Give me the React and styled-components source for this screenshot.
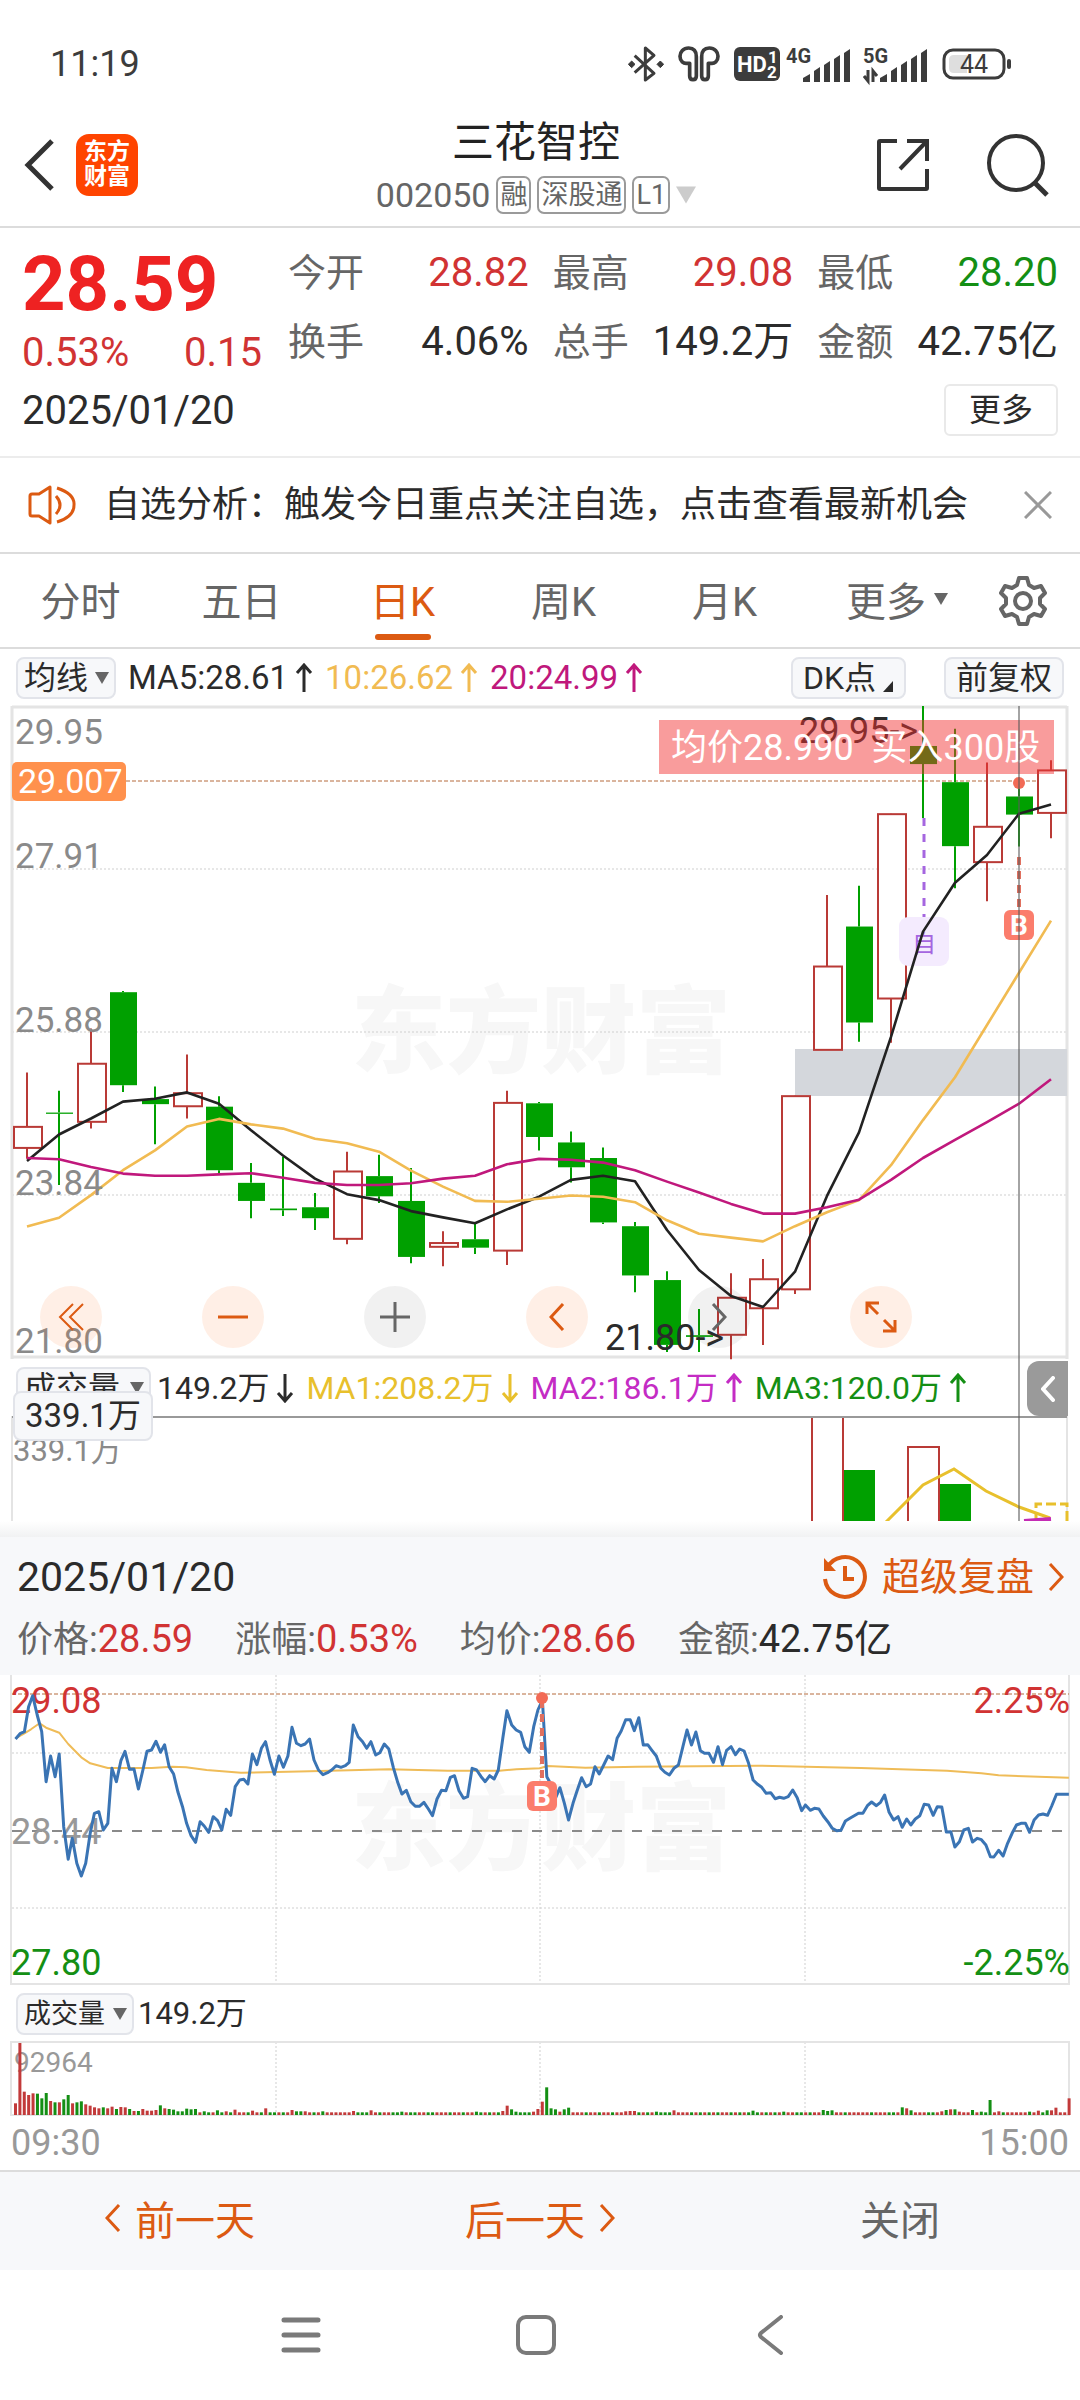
import React from "react";
import styled, { createGlobalStyle } from "styled-components";

const C = {
  ink: "#2b2b2b",
  mute: "#666666",
  axis: "#8a8a8a",
  line: "#dcdcdc",
  frame: "#e4e4e4",
  panel: "#f7f8fa",
  accent: "#dc5a12",
  red: "#d13333",
  green: "#148f14",
  fill: "#00a000",
  hollow: "#b93a36",
  ma5: "#222222",
  ma10: "#f1bb52",
  ma20: "#c0187c",
};

const Global = createGlobalStyle`
  *, *::before, *::after { box-sizing: border-box; }
  body {
    margin: 0;
    background: #ffffff;
    color: ${C.ink};
    font-family: Roboto, "Noto Sans CJK SC", sans-serif;
  }
  button, select { font: inherit; color: inherit; }
  svg { display: block; flex: none; }
  svg text { font-family: Roboto, "Noto Sans CJK SC", sans-serif; }
`;

/* ---------- status bar ---------- */

const StatusBar = styled.div`
  display: flex;
  align-items: center;
  justify-content: space-between;
  height: 120px;
  padding: 8px 68px 0 50px;
`;
const Clock = styled.time`
  font-size: 36px;
  line-height: 40px;
  color: #3c3c3c;
`;
const StatusIcons = styled.div`
  display: flex;
  align-items: center;
  gap: 14px;
  color: #3c3c3c;
`;
const SignalGroup = styled.div`
  display: flex;
  gap: 12px;
`;
const HdGroup = styled.div`
  display: flex;
  align-items: center;
  gap: 6px;
`;

function Bluetooth() {
  return (
    <svg width="36" height="40" viewBox="0 0 108 120">
      <path d="M20 35 78 88 52 108V12L78 34 20 86" fill="none" stroke="currentColor" strokeWidth="9" strokeLinejoin="round" />
      <path d="M11 51 21 61 11 71 1 61zM97 51l10 10-10 10-10-10z" fill="currentColor" stroke="currentColor" strokeWidth="3" strokeLinejoin="round" />
    </svg>
  );
}
function Earbuds() {
  return (
    <svg width="42" height="36" viewBox="0 0 126 108">
      <g fill="none" stroke="currentColor" strokeWidth="11" strokeLinejoin="round">
        <path d="M35 52V90q0 11 10 11t10-11V32C55 12 44 6 32 6 16 6 6 18 6 31 6 46 17 53 26 52z" />
        <path d="M91 52V90q0 11-10 11T71 90V32C71 12 82 6 94 6c16 0 26 12 26 25 0 15-11 22-20 21z" />
      </g>
    </svg>
  );
}
function HdBadge() {
  return (
    <svg width="46" height="36" viewBox="0 0 46 36">
      <rect y="1" width="46" height="34" rx="6" fill="currentColor" />
      <g fill="#fff" fontWeight="700">
        <text x="3" y="26" fontSize="22">HD</text>
        <text x="34" y="17" fontSize="17">1</text>
        <text x="33" y="32" fontSize="17">2</text>
      </g>
    </svg>
  );
}
function Signal({ label, arrows }) {
  return (
    <svg width="65" height="44" viewBox="0 -6 65 44">
      <text x="0" y="15" fontSize="20" fontWeight="700" fill="currentColor">{label}</text>
      <path d="M17 34v-4l7-4v8zM28 34V23l6-4v15zM38 34V17l6-4v21zM48 34V11l6-4v27zM58 34V5l6-4v33z" fill="currentColor" />
      {arrows && <path d="M5 22v11l-4-5M10 34V23l4 5" fill="none" stroke="currentColor" strokeWidth="3" />}
    </svg>
  );
}
function Battery() {
  return (
    <svg width="70" height="32" viewBox="0 0 70 32">
      <rect x="2" y="2" width="60" height="28" rx="9" fill="none" stroke="currentColor" strokeWidth="3" />
      <path d="M12 7h13v18H12q-5 0-5-5v-8q0-5 5-5z" fill="#dedede" />
      <rect x="65" y="11" width="4" height="10" rx="2" fill="currentColor" />
      <text x="32" y="25" fontSize="25" textAnchor="middle" fill="currentColor">44</text>
    </svg>
  );
}

/* ---------- header ---------- */

const Header = styled.header`
  display: grid;
  grid-template-columns: 1fr auto 1fr;
  align-items: start;
  height: 108px;
  padding: 0 30px 0 22px;
  border-bottom: 2px solid ${C.line};
`;
const HeaderSide = styled.div`
  display: flex;
  align-items: center;
  height: 90px;
  gap: ${(p) => p.$gap}px;
  justify-content: ${(p) => (p.$end ? "flex-end" : "flex-start")};
`;
const IconButton = styled.button`
  display: flex;
  align-items: center;
  justify-content: center;
  padding: 0;
  border: 0;
  background: none;
  color: ${(p) => p.$color || "#333333"};
`;
const Logo = styled.div`
  width: 62px;
  height: 62px;
  padding: 5px 0;
  border-radius: 13px;
  background: #ff4400;
  color: #ffffff;
  font-size: 23px;
  font-weight: 700;
  line-height: 25px;
  text-align: center;
`;
const TitleBlock = styled.div`
  display: flex;
  flex-direction: column;
  align-items: center;
  gap: 8px;
`;
const StockName = styled.h1`
  margin: 0;
  font-size: 42px;
  font-weight: 400;
  line-height: 46px;
  color: #222222;
`;
const StockMeta = styled.div`
  display: flex;
  align-items: center;
  gap: 6px;
  font-size: 34px;
  line-height: 42px;
  color: ${C.mute};
`;
const Tag = styled.span`
  padding: 0 2px;
  border: 2px solid #9a9a9a;
  border-radius: 7px;
  font-size: 27px;
  line-height: 34px;
`;

const Caret = ({ size = 14, color = "#666666" }) => (
  <svg width={size} height={size} viewBox="0 0 14 14">
    <path d="M0 1h14L7 13z" fill={color} />
  </svg>
);
const Chevron = ({ dir, w = 16, h = 28, stroke = 3 }) => (
  <svg width={w} height={h} viewBox="0 0 16 28" fill="none" stroke="currentColor" strokeWidth={stroke}>
    <path d={dir === "left" ? "M14 1 2 14 14 27" : "M2 1 14 14 2 27"} />
  </svg>
);

/* ---------- quote ---------- */

const Quote = styled.section`
  display: grid;
  grid-template-columns: 240px 1fr;
  column-gap: 26px;
  row-gap: 8px;
  align-content: start;
  height: 230px;
  padding: 10px 22px 0 22px;
  border-bottom: 2px solid #ececec;
`;
const Price = styled.div`
  font-size: 76px;
  font-weight: 700;
  line-height: 92px;
  color: #ee2222;
`;
const Change = styled.div`
  display: flex;
  justify-content: space-between;
  font-size: 40px;
  line-height: 46px;
  color: ${C.red};
`;
const Stats = styled.dl`
  display: grid;
  grid-template-columns: repeat(3, 1fr);
  grid-template-rows: 69px 69px;
  column-gap: 24px;
  margin: 0;
`;
const Stat = styled.div`
  display: flex;
  justify-content: space-between;
  align-items: center;
  font-size: 38px;
  line-height: 44px;
`;
const StatLabel = styled.dt`
  color: ${C.mute};
`;
const StatValue = styled.dd`
  margin: 0;
  font-size: 40px;
  color: ${(p) => p.$color || C.ink};
`;
const DateRow = styled.div`
  grid-column: 1 / -1;
  display: flex;
  justify-content: space-between;
  align-items: center;
  height: 52px;
  font-size: 40px;
`;
const MoreButton = styled.button`
  height: 52px;
  padding: 0 23px;
  border: 2px solid #e9e9e9;
  border-radius: 6px;
  background: #ffffff;
  font-size: 32px;
  line-height: 44px;
`;

/* ---------- notice ---------- */

const Notice = styled.section`
  display: flex;
  align-items: center;
  height: 96px;
  padding: 0 28px;
  border-bottom: 2px solid ${C.line};
`;
const NoticeText = styled.p`
  flex: 1;
  margin: 0 0 0 28px;
  font-size: 36px;
  line-height: 44px;
`;

/* ---------- tabs ---------- */

const Tabs = styled.nav`
  display: grid;
  grid-template-columns: repeat(5, 161fr) 184fr 68fr;
  height: 95px;
  padding-right: 23px;
  border-bottom: 2px solid ${C.line};
`;
const Tab = styled.button`
  display: flex;
  align-items: center;
  justify-content: center;
  gap: 8px;
  position: relative;
  padding: 0 0 4px;
  border: 0;
  background: none;
  font-size: 40px;
  color: ${(p) => (p.$active ? C.accent : C.mute)};
  &::after {
    content: "";
    display: ${(p) => (p.$active ? "block" : "none")};
    position: absolute;
    bottom: 7px;
    width: 56px;
    height: 6px;
    border-radius: 3px;
    background: ${C.accent};
  }
`;

/* ---------- indicator rows ---------- */

const IndicatorRow = styled.div`
  display: flex;
  align-items: center;
  gap: ${(p) => p.$gap || 12}px;
  height: ${(p) => p.$height}px;
  padding: 0 16px;
`;
const Readings = styled.div`
  display: flex;
  align-items: center;
  gap: 12px;
`;
const ChipGroup = styled.div`
  display: flex;
  gap: 38px;
  margin-left: auto;
`;
const Chip = styled.button`
  display: flex;
  align-items: flex-end;
  gap: 6px;
  height: 42px;
  padding: 0 10px;
  border: 2px solid #e2e4ea;
  border-radius: 8px;
  background: ${C.panel};
  font-size: 32px;
  line-height: 38px;
`;
const SelectBox = styled.label`
  display: inline-flex;
  align-items: center;
  position: relative;
  svg {
    position: absolute;
    right: 7px;
    pointer-events: none;
  }
`;
const ChipSelect = styled.select`
  appearance: none;
  height: 42px;
  padding: 0 ${(p) => p.$room}px 0 6px;
  border: 2px solid #e2e4ea;
  border-radius: 8px;
  background: ${C.panel};
  font-size: ${(p) => p.$size}px;
  line-height: 38px;
`;
const Reading = styled.span`
  display: flex;
  align-items: center;
  gap: 7px;
  font-size: ${(p) => p.$size || 33}px;
  line-height: 40px;
  white-space: nowrap;
  color: ${(p) => p.$color};
`;
const Arrow = ({ down }) => (
  <svg width="18" height="30" viewBox="0 0 18 30" fill="none" stroke="currentColor" strokeWidth="3">
    <path d={down ? "M9 1v27M2 20l7 8 7-8" : "M9 29V2M2 10l7-8 7 8"} />
  </svg>
);
function Dropdown({ label, value, size = 32, room = 27 }) {
  return (
    <SelectBox>
      <ChipSelect aria-label={label} defaultValue={value} $size={size} $room={room}>
        <option>{value}</option>
      </ChipSelect>
      <Caret size={14} />
    </SelectBox>
  );
}

/* ---------- daily candle chart ---------- */

const ChartArea = styled.section`
  position: relative;
`;
const Plot = styled.svg`
  width: 100%;
  height: auto;
  overflow: ${(p) => (p.$spill ? "visible" : "hidden")};
`;
const Crosshair = styled.div`
  position: absolute;
  top: 0;
  bottom: 0;
  left: 94.3%;
  width: 2px;
  background: rgba(90, 90, 90, 0.55);
`;
const CandleBox = styled.div`
  position: relative;
`;
const Controls = styled.div`
  position: absolute;
  left: 40px;
  bottom: 11px;
  display: flex;
  gap: 100px;
`;
const RoundButton = styled(IconButton)`
  width: 62px;
  height: 62px;
  border-radius: 50%;
  background: ${(p) => (p.$off ? "rgba(60, 60, 60, 0.07)" : "rgba(255, 110, 30, 0.11)")};
  color: ${(p) => (p.$off ? C.mute : C.accent)};
`;

// [high, body top, body bottom, low, rising]
const CANDLES = [
  [885, 1014, 1064, 1090, 1], [928, 980, 983, 1152, 0], [780, 864, 1002, 1018, 1],
  [691, 694, 915, 931, 0], [918, 948, 960, 1055, 0], [842, 934, 965, 994, 1],
  [941, 966, 1117, 1125, 0], [1100, 1147, 1190, 1231, 0], [1085, 1208, 1212, 1226, 0],
  [1171, 1205, 1231, 1259, 0], [1073, 1120, 1280, 1293, 1], [1080, 1131, 1179, 1195, 0],
  [1112, 1190, 1323, 1338, 0], [1262, 1290, 1299, 1345, 1], [1243, 1281, 1301, 1316, 0],
  [928, 957, 1308, 1342, 1], [955, 958, 1038, 1070, 0], [1025, 1051, 1110, 1146, 0],
  [1063, 1088, 1241, 1245, 0], [1240, 1250, 1367, 1407, 0], [1357, 1378, 1532, 1549, 0],
  [1447, 1509, 1513, 1549, 0], [1362, 1420, 1508, 1566, 1], [1328, 1376, 1445, 1532, 1],
  [940, 941, 1400, 1411, 1], [463, 633, 831, 831, 1], [441, 538, 766, 812, 0],
  [270, 271, 709, 814, 1], [14, 109, 152, 280, 0], [68, 195, 347, 447, 0],
  [148, 301, 385, 478, 1], [185, 229, 272, 348, 0], [143, 167, 268, 328, 1],
];
const MA5 = [1095, 1032, 994, 954, 947, 932, 959, 1022, 1082, 1137, 1174, 1188, 1214, 1229, 1243, 1210, 1180, 1140, 1130, 1143, 1259, 1354, 1416, 1442, 1358, 1178, 1027, 800, 550, 434, 368, 270, 248];
const MA10 = [1251, 1230, 1176, 1117, 1070, 1013, 995, 1008, 1018, 1042, 1053, 1073, 1118, 1156, 1190, 1192, 1185, 1177, 1180, 1193, 1236, 1268, 1277, 1286, 1250, 1217, 1188, 1105, 998, 896, 772, 648, 524];
const MA20 = [1088, 1091, 1109, 1125, 1130, 1130, 1127, 1124, 1135, 1147, 1152, 1152, 1148, 1137, 1130, 1103, 1090, 1092, 1099, 1117, 1144, 1170, 1197, 1220, 1220, 1205, 1187, 1140, 1088, 1045, 1003, 959, 901];

const cx = (i) => 27 + 32 * i;
const cy = (v) => 706 + (v - 14) / 2.376;
const maPath = (list) => list.map((v, i) => `${cx(i)},${cy(v).toFixed(1)}`).join(" ");

function Watermark({ y }) {
  return (
    <text x="541" y={y} fontSize="95" fontWeight="900" textAnchor="middle" fill="#f7f7f7">东方财富</text>
  );
}

function BuyMark({ x, y, dotY, lineTop }) {
  return (
    <g>
      <path d={`M${x} ${lineTop}V${y - 15}`} stroke="#e0705f" strokeWidth="4" strokeDasharray="8 6" />
      <circle cx={x} cy={dotY} r="6" fill="#f26a55" />
      <rect x={x - 15} y={y - 15} width="30" height="30" rx="6" fill="#fb7d6c" />
      <text x={x} y={y + 10} fontSize="28" fontWeight="700" textAnchor="middle" fill="#fff">B</text>
    </g>
  );
}

function CandleChart() {
  return (
    <Plot $spill viewBox="0 706 1080 653" role="img" aria-label="日K">
      <Watermark y="1066" />
      <g stroke="#cfcfcf" strokeWidth="1" strokeDasharray="2 2">
        <path d="M12 869H1067M12 1032H1067M12 1195H1067" />
      </g>
      <path d="M12 707H1067M12 1357H1067" stroke={C.frame} strokeWidth="3" />
      <path d="M12 706V1359M1067 706V1359" stroke={C.frame} strokeWidth="3" />
      <rect x="795" y="1049" width="272" height="47" fill="#d4d7dc" />
      <path d="M12 781H1067" stroke="#b56a3c" strokeWidth="1" strokeDasharray="4 2" />
      {CANDLES.map(([hi, top, bot, lo, up], i) => (
        <g key={i}>
          <path
            d={`M${cx(i)} ${cy(hi)}V${cy(top)}M${cx(i)} ${cy(bot)}V${cy(lo)}`}
            stroke={up ? C.hollow : C.fill}
            strokeWidth="2"
          />
          <rect
            x={cx(i) - 13}
            y={cy(top)}
            width={up ? 28 : 27}
            height={cy(bot) - cy(top)}
            fill={up ? "#ffffff" : C.fill}
            stroke={up ? C.hollow : "none"}
            strokeWidth="2"
          />
        </g>
      ))}
      <path d="M924 818V918" stroke="#a566e0" strokeWidth="3" strokeDasharray="8 8" />
      <rect x="899" y="917" width="50" height="49" rx="9" fill="#f4ebfe" />
      <text x="924" y="952" fontSize="24" textAnchor="middle" fill="#a566e0">自</text>
      <g fill="none" strokeWidth="2.6" strokeLinejoin="round">
        <polyline points={maPath(MA5)} stroke={C.ma5} />
        <polyline points={maPath(MA10)} stroke={C.ma10} />
        <polyline points={maPath(MA20)} stroke={C.ma20} />
      </g>
      <g fontSize="36" fill={C.ink}>
        <text x="799" y="743">29.95-&gt;</text>
        <text x="605" y="1350">21.80-&gt;</text>
      </g>
      <g fontSize="35" fill={C.axis}>
        <text x="15" y="744">29.95</text>
        <text x="15" y="868">27.91</text>
        <text x="15" y="1032">25.88</text>
        <text x="15" y="1195">23.84</text>
        <text x="15" y="1353">21.80</text>
      </g>
      <rect x="12" y="762" width="114" height="39" rx="5" fill="#ff914d" />
      <text x="18" y="793" fontSize="34" fill="#fff">29.007</text>
      <BuyMark x={1019} y={925} dotY={783} lineTop={857} />
      <rect x="659" y="720" width="395" height="54" fill="rgba(243, 48, 48, 0.48)" />
      <text x="671" y="760" fontSize="36" fill="#fff">均价28.990&#160;&#160;买入300股</text>
    </Plot>
  );
}

/* ---------- daily volume ---------- */

const ExpandTab = styled(IconButton)`
  position: absolute;
  right: 12px;
  top: 2px;
  width: 41px;
  height: 55px;
  border-radius: 12px 0 0 12px;
  background: #9a9a9a;
  color: #ffffff;
`;
const VolumeHead = styled.div`
  position: relative;
`;
const VolumeBox = styled.div`
  position: relative;
`;
const CursorValue = styled.output`
  position: absolute;
  left: 13px;
  top: -25px;
  padding: 0 10px;
  border: 2px solid #e2e4ea;
  border-radius: 8px;
  background: ${C.panel};
  font-size: 33px;
  line-height: 46px;
`;

function DailyVolume() {
  return (
    <Plot viewBox="0 1416 1080 105" role="img" aria-label="成交量">
      <text x="13" y="1461" fontSize="31" fill={C.axis}>339.1万</text>
      <path d="M12 1416V1521M1067 1416V1521" stroke={C.frame} strokeWidth="2" />
      <g fill="#fff" stroke={C.hollow} strokeWidth="2">
        <rect x="812" y="1417" width="31" height="120" />
        <rect x="908" y="1447" width="31" height="90" />
      </g>
      <g fill={C.fill}>
        <rect x="844" y="1470" width="31" height="60" />
        <rect x="940" y="1484" width="31" height="60" />
      </g>
      <path d="M886 1522 923 1485 954 1469 986 1491 1019 1507 1050 1518" fill="none" stroke="#e8c02c" strokeWidth="3" />
      <path d="M1036 1522V1504H1067V1522" fill="none" stroke="#e8c02c" strokeWidth="3" strokeDasharray="10 4" />
      <path d="M1024 1521 1051 1519" stroke="#c42cb4" strokeWidth="4" />
      <path d="M12 1417H1067" stroke="#999999" strokeWidth="2" />
    </Plot>
  );
}

/* ---------- review panel ---------- */

const PanelShadow = styled.div`
  height: 16px;
  background: linear-gradient(#ffffff, #f1f2f3);
`;
const Panel = styled.section`
  height: 138px;
  padding: 12px 16px 0 17px;
  background: ${C.panel};
`;
const PanelTop = styled.div`
  display: flex;
  justify-content: space-between;
  align-items: center;
  height: 56px;
  font-size: 41px;
`;
const ReviewLink = styled.a`
  display: flex;
  align-items: center;
  gap: 14px;
  color: ${C.accent};
  font-size: 38px;
  line-height: 46px;
  text-decoration: none;
`;
const PanelStats = styled.div`
  display: flex;
  gap: 42px;
  padding-top: 10px;
  font-size: 36px;
  line-height: 48px;
  color: ${C.mute};
`;
const Strong = styled.span`
  font-size: 38px;
  color: ${(p) => p.$color || C.ink};
`;

/* ---------- intraday chart ---------- */

const PRICE_POINTS =
  "45,207 58,191 71,185 83,110 95,77 108,135 121,185 134,335 147,258 160,320 172,252 185,470 198,568 210,505 223,580 236,618 249,580 262,490 274,430 287,425 300,480 313,460 325,295 338,335 351,272 363,244 376,298 389,297 402,357 415,300 427,244 440,240 453,214 466,247 478,224 491,290 504,312 517,367 530,410 542,460 555,497 568,517 581,455 593,468 606,487 619,440 632,452 644,480 657,418 670,436 683,350 696,330 708,328 720,342 733,252 746,284 759,235 771,215 784,270 797,313 810,258 823,292 836,258 848,172 861,220 874,227 886,222 899,207 912,270 925,300 938,314 951,308 964,299 976,287 990,292 1003,287 1014,277 1026,165 1040,200 1053,215 1065,235 1077,215 1091,255 1103,248 1116,222 1129,237 1142,292 1155,337 1167,372 1180,361 1193,395 1206,409 1218,409 1231,397 1244,417 1256,437 1269,387 1282,361 1295,362 1308,322 1320,317 1333,362 1346,385 1358,380 1371,295 1384,300 1397,320 1409,335 1422,317 1435,327 1447,300 1460,205 1472,122 1486,165 1499,180 1512,187 1524,230 1537,247 1550,170 1562,120 1575,90 1588,320 1601,345 1613,385 1626,353 1639,400 1651,450 1664,400 1676,362 1689,323 1702,350 1715,342 1728,290 1740,312 1753,285 1766,258 1779,269 1792,205 1804,183 1817,149 1830,149 1842,182 1855,143 1868,225 1881,224 1893,241 1906,258 1919,295 1931,307 1944,315 1957,295 1970,285 1983,230 1995,180 2008,225 2021,186 2034,242 2046,250 2059,250 2072,277 2085,230 2098,284 2110,241 2123,230 2136,254 2148,237 2161,243 2174,280 2187,330 2200,343 2212,352 2225,370 2238,368 2251,386 2264,382 2276,385 2289,380 2302,360 2315,383 2328,422 2339,405 2353,421 2365,415 2378,417 2391,438 2404,455 2417,475 2430,482 2442,481 2455,453 2468,445 2493,430 2506,430 2519,407 2531,396 2545,407 2557,397 2569,375 2582,427 2595,450 2608,440 2620,472 2633,447 2645,465 2658,447 2671,437 2684,403 2697,405 2710,436 2722,410 2735,411 2748,486 2761,485 2773,531 2786,515 2799,480 2812,475 2824,516 2838,505 2850,509 2863,525 2876,560 2886,561 2900,541 2913,558 2926,520 2939,490 2952,465 2965,460 2978,460 2990,487 3003,450 3016,435 3029,432 3042,436 3054,408 3068,373 3104,373";
const AVERAGE_POINTS =
  "45,205 71,190 90,178 115,160 134,173 172,188 198,222 236,262 262,280 313,294 440,294 500,290 540,292 600,300 700,308 900,304 1130,298 1300,302 1450,302 1500,298 1568,295 1590,288 1700,293 1850,290 2200,287 2500,294 2750,302 2850,310 2900,316 3104,323";
const toPlot = (list) =>
  list
    .split(" ")
    .map((pair) => {
      const [x, y] = pair.split(",").map(Number);
      return `${(x / 2.904).toFixed(1)},${(1670 + y / 3).toFixed(1)}`;
    })
    .join(" ");

function IntradayChart() {
  return (
    <Plot viewBox="0 1675 1080 311" role="img" aria-label="分时">
      <Watermark y="1863" />
      <path d="M12 1753H1069M12 1908H1069M276 1675V1984M540 1675V1984M805 1675V1984" stroke="#cfcfcf" strokeDasharray="2 2" />
      <path d="M11 1675V1984M1069 1675V1984M10 1984H1070" stroke={C.frame} strokeWidth="2" fill="none" />
      <path d="M12 1694H1069" stroke="#b56a3c" strokeDasharray="4 2" />
      <path d="M12 1831H1069" stroke="#8a8a8a" strokeWidth="2" strokeDasharray="10 10" />
      <polyline points={toPlot(AVERAGE_POINTS)} fill="none" stroke="#efbc58" strokeWidth="2" strokeLinejoin="round" />
      <g fontSize="36">
        <text x="11" y="1713" fill={C.red}>29.08</text>
        <text x="11" y="1844" fill="#999">28.44</text>
        <text x="11" y="1975" fill={C.green}>27.80</text>
        <text x="1070" y="1713" fill={C.red} textAnchor="end">2.25%</text>
        <text x="1070" y="1975" fill={C.green} textAnchor="end">-2.25%</text>
      </g>
      <polyline points={toPlot(PRICE_POINTS)} stroke="#3a74b4" strokeWidth="3" fill="none" strokeLinejoin="round" />
      <BuyMark x={542} y={1796} dotY={1698} lineTop={1700} />
    </Plot>
  );
}

// bar heights that rise above the floor level, keyed by bar index
const VOLUME_PEAKS = {
  0: 35, 1: 216, 2: 70, 3: 60, 4: 65, 5: 64, 6: 50, 7: 66, 8: 42, 9: 38, 10: 38, 11: 47, 12: 60, 13: 35, 14: 38,
  15: 41, 16: 32, 17: 28, 18: 23, 19: 20, 20: 23, 21: 20, 22: 25, 23: 18, 24: 24, 25: 23, 26: 18, 27: 12, 28: 12,
  29: 18, 30: 13, 31: 13, 32: 15, 33: 29, 34: 20, 35: 18, 36: 16, 37: 11, 38: 11, 39: 19, 40: 17, 41: 18, 43: 11,
  46: 14, 48: 11, 50: 16, 54: 13, 57: 20, 63: 15, 64: 11, 65: 11, 66: 11, 70: 11, 77: 12, 81: 14, 88: 10, 105: 10,
  111: 12, 112: 28, 113: 17, 114: 10, 118: 10, 119: 18, 120: 40, 121: 83, 122: 20, 123: 17, 124: 10, 125: 17,
  126: 22, 139: 11, 140: 12, 141: 12, 146: 10, 150: 14, 168: 13, 175: 10, 184: 15, 185: 12, 186: 14, 202: 23,
  203: 20, 204: 14, 211: 11, 212: 15, 213: 17, 214: 17, 215: 10, 218: 15, 220: 10, 222: 45, 224: 11, 231: 10,
  233: 13, 235: 14, 236: 14, 237: 22, 240: 50,
};
const GREEN_BARS = new Set([
  5, 6, 7, 9, 11, 12, 14, 15, 20, 23, 26, 28, 33, 35, 36, 37, 38, 39, 40, 41, 43, 44, 46, 47, 49, 53, 56, 58, 59, 61,
  64, 65, 68, 70, 78, 79, 80, 83, 86, 87, 88, 90, 91, 94, 95, 99, 102, 105, 106, 108, 110, 113, 114, 115, 116, 117,
  121, 122, 123, 125, 126, 130, 133, 136, 142, 144, 146, 147, 148, 149, 154, 156, 158, 160, 163, 165, 167, 168, 169,
  171, 173, 175, 178, 179, 181, 184, 185, 186, 189, 195, 199, 200, 202, 204, 208, 209, 212, 214, 218, 220, 221, 222,
  225, 231, 234, 235,
]);

function IntradayVolume() {
  return (
    <Plot viewBox="0 2041 1080 75" role="img" aria-label="成交量">
      <path d="M276 2042V2115M540 2042V2115M805 2042V2115" stroke="#cfcfcf" strokeDasharray="2 2" />
      <path d="M11 2042H1069V2115H11z" fill="none" stroke={C.frame} strokeWidth="2" />
      <text x="14" y="2072" fontSize="28" fill="#999">92964</text>
      {Array.from({ length: 241 }, (_, i) => {
        const h = (VOLUME_PEAKS[i] || 8) / 3;
        return (
          <rect
            key={i}
            x={14 + i * 4.39}
            y={2115 - h}
            width="3"
            height={h}
            fill={GREEN_BARS.has(i) ? C.green : "#c23a3a"}
          />
        );
      })}
    </Plot>
  );
}

const TimeAxis = styled.div`
  display: flex;
  justify-content: space-between;
  height: 54px;
  padding: 6px 11px 0;
  font-size: 36px;
  line-height: 42px;
  color: #999999;
`;

/* ---------- footer ---------- */

const DayNav = styled.nav`
  display: grid;
  grid-template-columns: repeat(3, 1fr);
  height: 100px;
  border-top: 2px solid ${C.line};
  background: ${C.panel};
`;
const DayButton = styled.button`
  display: flex;
  align-items: center;
  justify-content: center;
  gap: 14px;
  padding: 0 0 6px;
  border: 0;
  background: none;
  font-size: 40px;
  color: ${(p) => (p.$plain ? C.mute : C.accent)};
`;
const SystemNav = styled.nav`
  display: flex;
  align-items: center;
  justify-content: center;
  gap: 195px;
  height: 130px;
  padding-right: 8px;
`;

export default function App() {
  return (
    <>
      <Global />
      <StatusBar>
        <Clock>11:19</Clock>
        <StatusIcons>
          <Bluetooth />
          <Earbuds />
          <HdGroup>
            <HdBadge />
            <SignalGroup>
              <Signal label="4G" />
              <Signal label="5G" arrows />
            </SignalGroup>
          </HdGroup>
          <Battery />
        </StatusIcons>
      </StatusBar>

      <Header>
        <HeaderSide $gap={22}>
          <IconButton aria-label="返回">
            <svg width="32" height="52" viewBox="0 0 32 52" fill="none" stroke="currentColor" strokeWidth="5">
              <path d="M30 2 6 26 30 50" />
            </svg>
          </IconButton>
          <Logo>东方<br />财富</Logo>
        </HeaderSide>
        <TitleBlock>
          <StockName>三花智控</StockName>
          <StockMeta>
            <span>002050</span>
            <Tag>融</Tag>
            <Tag>深股通</Tag>
            <Tag>L1</Tag>
            <Caret size={20} color="#cccccc" />
          </StockMeta>
        </TitleBlock>
        <HeaderSide $gap={56} $end>
          <IconButton aria-label="分享">
            <svg width="54" height="54" viewBox="0 0 54 54" fill="none" stroke="currentColor" strokeWidth="4">
              <path d="M21 3H4q-1 0-1 1V50q0 1 1 1H50q1 0 1-1V31M31 3H51V23M51 3 24 31" />
            </svg>
          </IconButton>
          <IconButton aria-label="搜索">
            <svg width="64" height="64" viewBox="0 0 64 64" fill="none" stroke="currentColor" strokeWidth="4">
              <circle cx="30" cy="30" r="27" />
              <path d="M48 49 61 62" strokeWidth="5" />
            </svg>
          </IconButton>
        </HeaderSide>
      </Header>

      <Quote>
        <div>
          <Price>28.59</Price>
          <Change>
            <span>0.53%</span>
            <span>0.15</span>
          </Change>
        </div>
        <Stats>
          <Stat><StatLabel>今开</StatLabel><StatValue $color={C.red}>28.82</StatValue></Stat>
          <Stat><StatLabel>最高</StatLabel><StatValue $color={C.red}>29.08</StatValue></Stat>
          <Stat><StatLabel>最低</StatLabel><StatValue $color={C.green}>28.20</StatValue></Stat>
          <Stat><StatLabel>换手</StatLabel><StatValue>4.06%</StatValue></Stat>
          <Stat><StatLabel>总手</StatLabel><StatValue>149.2万</StatValue></Stat>
          <Stat><StatLabel>金额</StatLabel><StatValue>42.75亿</StatValue></Stat>
        </Stats>
        <DateRow>
          <span>2025/01/20</span>
          <MoreButton>更多</MoreButton>
        </DateRow>
      </Quote>

      <Notice>
        <svg width="48" height="40" viewBox="0 0 48 40" fill="none" stroke={C.accent} strokeWidth="3" strokeLinejoin="round">
          <path d="M2 11q0-2 2-2h7L22 2V38L11 31H4q-2 0-2-2zM28 11q8 9 0 18M29 3q18 6 17 17 0 12-17 17" />
        </svg>
        <NoticeText>自选分析：触发今日重点关注自选，点击查看最新机会</NoticeText>
        <IconButton aria-label="关闭提示" $color="#999999">
          <svg width="28" height="28" viewBox="0 0 28 28" fill="none" stroke="currentColor" strokeWidth="3">
            <path d="M1 1 27 27M27 1 1 27" />
          </svg>
        </IconButton>
      </Notice>

      <Tabs>
        <Tab>分时</Tab>
        <Tab>五日</Tab>
        <Tab $active>日K</Tab>
        <Tab>周K</Tab>
        <Tab>月K</Tab>
        <Tab>更多<Caret size={14} /></Tab>
        <IconButton aria-label="设置" $color={C.mute}>
          <svg width="50" height="50" viewBox="0 0 50 50" fill="none" stroke="currentColor" strokeWidth="4" strokeLinejoin="round">
            <path d="M21 2h8l2 7 5 3 7-2 4 7-5 5v6l5 5-4 7-7-2-5 3-2 7h-8l-2-7-5-3-7 2-4-7 5-5v-6l-5-5 4-7 7 2 5-3z" />
            <circle cx="25" cy="25" r="8" />
          </svg>
        </IconButton>
      </Tabs>

      <IndicatorRow $height={57}>
        <Dropdown label="均线" value="均线" room={25} />
        <Readings>
          <Reading $color={C.ink}>MA5:28.61<Arrow /></Reading>
          <Reading $color={C.ma10}>10:26.62<Arrow /></Reading>
          <Reading $color={C.ma20}>20:24.99<Arrow /></Reading>
        </Readings>
        <ChipGroup>
          <Chip>
            DK点
            <svg width="12" height="18" viewBox="0 0 12 18"><path d="M11 2v11H1z" fill={C.ink} /></svg>
          </Chip>
          <Chip>前复权</Chip>
        </ChipGroup>
      </IndicatorRow>

      <ChartArea>
        <CandleBox>
          <CandleChart />
          <Controls>
            <RoundButton aria-label="最早">
              <svg width="26" height="28" viewBox="0 0 26 28" fill="none" stroke="currentColor" strokeWidth="2">
                <path d="M15 1 2 14 15 27M25 1 12 14 25 27" />
              </svg>
            </RoundButton>
            <RoundButton aria-label="缩小">
              <svg width="30" height="30" viewBox="0 0 30 30" stroke="currentColor" strokeWidth="3"><path d="M0 15H30" /></svg>
            </RoundButton>
            <RoundButton aria-label="放大" $off>
              <svg width="30" height="30" viewBox="0 0 30 30" stroke="currentColor" strokeWidth="3"><path d="M0 15H30M15 0V30" /></svg>
            </RoundButton>
            <RoundButton aria-label="向前"><Chevron dir="left" /></RoundButton>
            <RoundButton aria-label="向后" $off><Chevron dir="right" /></RoundButton>
            <RoundButton aria-label="全屏">
              <svg width="32" height="32" viewBox="0 0 32 32" fill="none" stroke="currentColor" strokeWidth="3">
                <path d="M2 13V2H14M2 2 13 13M30 19V30H18M30 30 19 19" />
              </svg>
            </RoundButton>
          </Controls>
        </CandleBox>
        <VolumeHead>
          <IndicatorRow $height={57} $gap={6}>
            <Dropdown label="指标" value="成交量" room={28} />
            <Readings>
              <Reading $size={32} $color={C.ink}>149.2万<Arrow down /></Reading>
              <Reading $size={32} $color="#e8c02c">MA1:208.2万<Arrow down /></Reading>
              <Reading $size={32} $color="#c42cc4">MA2:186.1万<Arrow /></Reading>
              <Reading $size={32} $color={C.green}>MA3:120.0万<Arrow /></Reading>
            </Readings>
          </IndicatorRow>
          <ExpandTab aria-label="展开">
            <svg width="14" height="26" viewBox="0 0 14 26" fill="none" stroke="currentColor" strokeWidth="4" strokeLinecap="round">
              <path d="M12 2 2 13 12 24" />
            </svg>
          </ExpandTab>
        </VolumeHead>
        <VolumeBox>
          <DailyVolume />
          <CursorValue>339.1万</CursorValue>
        </VolumeBox>
        <Crosshair />
      </ChartArea>

      <PanelShadow />
      <Panel>
        <PanelTop>
          <span>2025/01/20</span>
          <ReviewLink href="#review">
            <svg width="46" height="46" viewBox="0 0 46 46" fill="none" stroke="currentColor" strokeWidth="4">
              <path d="M5 14A20 20 0 1 1 3 25M23 12V25H32" />
              <path d="M2 4V17H14z" fill="currentColor" stroke="none" />
            </svg>
            超级复盘
            <Chevron dir="right" />
          </ReviewLink>
        </PanelTop>
        <PanelStats>
          <span>价格:<Strong $color={C.red}>28.59</Strong></span>
          <span>涨幅:<Strong $color={C.red}>0.53%</Strong></span>
          <span>均价:<Strong $color={C.red}>28.66</Strong></span>
          <span>金额:<Strong>42.75亿</Strong></span>
        </PanelStats>
      </Panel>

      <IntradayChart />
      <IndicatorRow $height={55} $gap={4}>
        <Dropdown label="分时指标" value="成交量" size={27} room={27} />
        <Reading $size={31} $color={C.ink}>149.2万</Reading>
      </IndicatorRow>
      <IntradayVolume />
      <TimeAxis>
        <span>09:30</span>
        <span>15:00</span>
      </TimeAxis>

      <DayNav>
        <DayButton><Chevron dir="left" />前一天</DayButton>
        <DayButton>后一天<Chevron dir="right" /></DayButton>
        <DayButton $plain>关闭</DayButton>
      </DayNav>

      <SystemNav>
        <IconButton aria-label="最近任务" $color="#7a7a7a">
          <svg width="40" height="40" viewBox="0 0 40 40" stroke="currentColor" strokeWidth="5" strokeLinecap="round">
            <path d="M3 5H37M3 20H37M3 35H37" />
          </svg>
        </IconButton>
        <IconButton aria-label="主屏幕" $color="#7a7a7a">
          <svg width="40" height="40" viewBox="0 0 40 40" fill="none" stroke="currentColor" strokeWidth="4">
            <rect x="2" y="2" width="36" height="36" rx="8" />
          </svg>
        </IconButton>
        <IconButton aria-label="返回上级" $color="#7a7a7a">
          <svg width="40" height="40" viewBox="0 0 40 40" fill="none" stroke="currentColor" strokeWidth="4" strokeLinecap="round">
            <path d="M30 2 10 18q-2 2 0 4L30 38" />
          </svg>
        </IconButton>
      </SystemNav>
    </>
  );
}
